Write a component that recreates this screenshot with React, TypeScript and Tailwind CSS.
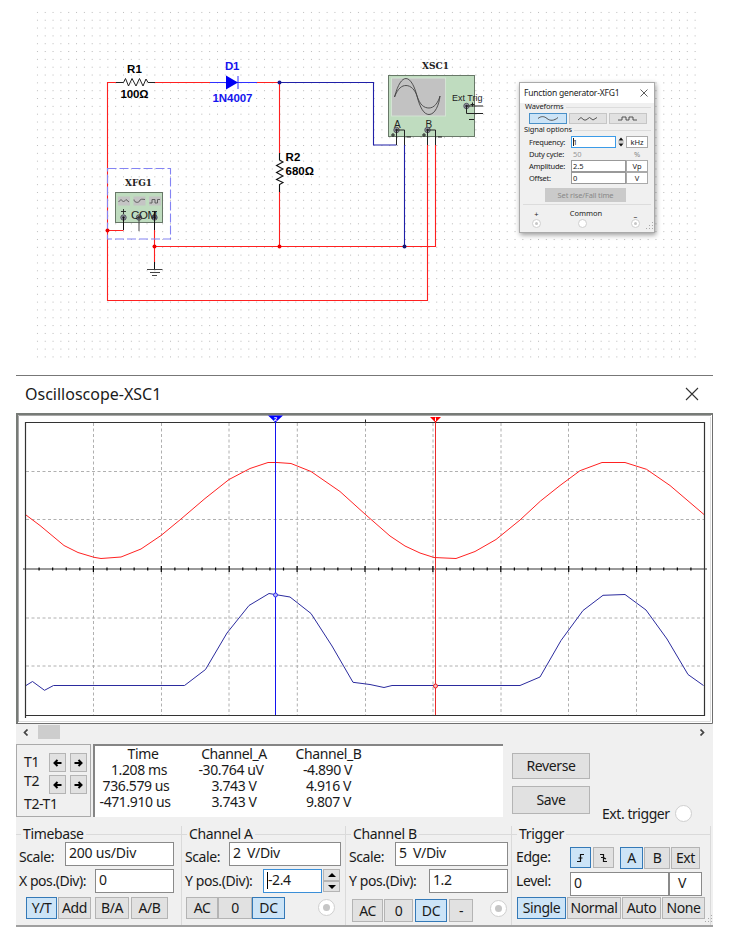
import React from "react";

const RED = "#ff2020";
const NAVY = "#2020a8";
const ARIAL = "'Liberation Sans', Arial, sans-serif";
const SLAB = "'DejaVu Serif', 'Courier New', serif";

/* ---------- Schematic ---------- */

function Pin({ x, y }: { x: number; y: number }) {
  return (
    <g>
      <circle cx={x} cy={y} r="2.7" fill="#999aa8" stroke="#55555f" />
      <circle cx={x} cy={y} r="1.2" fill="#222" />
    </g>
  );
}

function Schematic() {
  return (
    <svg width="746" height="374" viewBox="0 0 746 374" className="block" fill="none">
      <defs>
        <pattern id="dots" x="36.9" y="11.9" width="7.83" height="7.83" patternUnits="userSpaceOnUse">
          <rect width="1" height="1" fill="#b8b8b8" />
        </pattern>
      </defs>
      <rect x="36.5" y="11.5" width="660" height="347" fill="url(#dots)" />

      {/* wires */}
      <g stroke={RED} strokeWidth="1.1">
        <path d="M116 82.5H107.5V300.5H427.5V145M155 82.5H210M257 82.5H279.5V153M279.5 192V246.5M435.5 145V246.5H154.5M107.5 230.5H123.5M154.5 230V262" />
      </g>
      <path d="M279.5 82.5H373.5V145H396.5M404.5 145V246.5" stroke={NAVY} strokeWidth="1.1" />

      {/* R1 */}
      <path d="M116 82.5H123.5L125.5 78.5L128.5 86L132 78.5L136 86L139.5 78.5L143 86L146 79L148 82.5H155" stroke="#222" strokeWidth="1" />
      <g fontFamily={ARIAL} fontWeight="700" fontSize="11.5" fill="#000">
        <text x="127" y="73" textLength="15">R1</text>
        <text x="120.5" y="98" textLength="28">100Ω</text>
        <text x="285.5" y="161" textLength="15">R2</text>
        <text x="285.5" y="175" textLength="28.5">680Ω</text>
        <text x="225" y="70" fill="#1515ee" textLength="14.5">D1</text>
        <text x="212.5" y="101.5" fill="#1515ee" textLength="40">1N4007</text>
      </g>

      {/* D1 */}
      <path d="M210 82.5H257M238 76V89" stroke="#3030ff" />
      <path d="M226 75.5V89.5L238 82.5Z" fill="#0000f5" />

      {/* R2 */}
      <path d="M279.5 153V160L283 162L276.5 165.5L283 169L276.5 172.5L283 176L276.5 179.5L283 182.5L279.5 184.5V192" stroke="#111" strokeWidth="1.1" />

      {/* function generator symbol */}
      <rect x="107.5" y="168.5" width="63" height="70.5" stroke="#8484f4" strokeDasharray="9 3" strokeWidth="1.1" />
      <text x="125" y="186" fontFamily={SLAB} fontWeight="700" fontSize="9.5" fill="#222" textLength="27" lengthAdjust="spacingAndGlyphs">XFG1</text>
      <rect x="115.5" y="192.5" width="47" height="30" fill="#bfdcbf" stroke="#687868" />
      <g fill="#c4c4c4">
        <rect x="118" y="196.5" width="12" height="9" />
        <rect x="133.5" y="196.5" width="12" height="9" />
        <rect x="149" y="196.5" width="12" height="9" />
      </g>
      <g stroke="#555" strokeWidth=".9">
        <path d="M118.5 202L121 199.5L123.5 202L126 199.5L129 202" />
        <path d="M134 199.5C134 203 139 203 139.5 201C140 199 142 199 145 199.5" />
        <path d="M149.5 203H152V199.5H155V203H157.5V199.5H160" />
        <path d="M121 211.5H126M123.5 209V214M152 211.5H157" stroke="#222" />
      </g>
      <Pin x={123.5} y={217.5} />
      <Pin x={139} y={217.5} />
      <Pin x={154.5} y={217.5} />
      <text x="131" y="218.5" fontFamily={ARIAL} fontSize="11.5" fill="#222" textLength="26">COM</text>
      <path d="M123.5 217V230M154.5 211V230M154.5 262V269" stroke="#111" />
      <path d="M139 217V231M147 269.5H162.5M150 272.5H160M152 275.5H157" stroke="#444" />

      {/* oscilloscope symbol */}
      <text x="422" y="69" fontFamily={SLAB} fontWeight="700" fontSize="9.5" fill="#222" textLength="27" lengthAdjust="spacingAndGlyphs">XSC1</text>
      <rect x="388.5" y="75.5" width="86" height="61" fill="#bfdcbf" stroke="#687868" />
      <rect x="391.5" y="78" width="54" height="38" fill="#c2c2c2" stroke="#d4e3d4" />
      <path d="M394.5 97C398 84 402 78.500 406 78.500C411 78.500 415 88 417 96C420 108 424 114.500 429 114.500C435 114.500 439 105 440 96M394.500 97C398 88 402 85.500 406 85.500C411 85.500 415 90 417 96C420 105 424 108 429 108C434 108 438 103 440 96" stroke="#444" strokeWidth=".9" />
      <g fontFamily={ARIAL} fill="#222">
        <text x="452" y="101" fontSize="9.5" textLength="30.5" lengthAdjust="spacingAndGlyphs">Ext Trig</text>
        <text x="394" y="127.5" fontSize="10">A</text>
        <text x="425.5" y="127.5" fontSize="10">B</text>
      </g>
      <Pin x={466.5} y={106} />
      <Pin x={396.5} y={130} />
      <Pin x={427.5} y={130} />
      <path d="M466.5 106V113.5H483M466.5 106H483M469 119.5H474M396.5 130V145M396.5 130H404.5V145M427.5 130V145M427.5 130H435.5V145M391 135H395M393 133V137M422 135H426M424 133V137M406.5 137H411M438 137H442M470.5 104.5H474.5M472.5 102.5V106.5" stroke="#222" />

      {/* junctions */}
      <g fill="#ee0000">
        <circle cx="107.5" cy="230.5" r="2" />
        <circle cx="154.5" cy="246.5" r="2" />
        <circle cx="279.5" cy="246.5" r="2" />
      </g>
      <circle cx="279.5" cy="82.5" r="2" fill="#181890" />
      <circle cx="404.5" cy="246.5" r="2" fill="#181870" />
    </svg>
  );
}

/* ---------- Function generator window ---------- */

function Radio({ className = "", dot = false }: { className?: string; dot?: boolean }) {
  return (
    <span className={`flex shrink-0 items-center justify-center rounded-full border border-[#cfcfcf] bg-white ${className}`}>
      {dot && <span className="size-1/2 rounded-full bg-[#c6c6c6]" />}
    </span>
  );
}

function WaveButton({ d, on = false }: { d: string; on?: boolean }) {
  return (
    <div className={`flex h-[11px] w-[38px] items-center justify-center border ${on ? "border-[#4a90c8] bg-[#cce4f7]" : "border-[#c6c6c6] bg-[#e1e1e1]"}`}>
      <svg width="22" height="7" viewBox="0 0 22 7" fill="none" stroke="#444" strokeWidth=".9">
        <path d={d} />
      </svg>
    </div>
  );
}

function Param({ label, value, unit, kind = "normal" }: { label: string; value: string; unit: string; kind?: "normal" | "focus" | "off" }) {
  const border = kind === "off" ? "border-transparent text-[#999]" : kind === "focus" ? "border-[#3b9be8] bg-white" : "border-[#999] bg-white";
  return (
    <div className="flex h-[12px] items-center">
      <span className="w-[42px] whitespace-nowrap tracking-[-0.25px]">{label}</span>
      <span className={`flex h-[12px] items-center border pb-px pl-px ${border} ${kind === "focus" ? "w-[45px]" : "w-[55px]"}`}>
        {kind === "focus" && <span className="-mr-px h-[8px] w-px bg-[#222]" />}
        {value}
      </span>
      {kind === "focus" && (
        <svg width="10" height="12" viewBox="0 0 10 12" fill="#111">
          <path d="M2.500 4.500L5 1.500L7.500 4.500ZM2.500 7.500L5 10.500L7.500 7.500Z" />
          <path d="M2 6H8" stroke="#aaa" />
        </svg>
      )}
      <span className={`flex h-[12px] w-[22px] items-center justify-center border pb-px ${kind === "off" ? "border-transparent text-[#888]" : "border-[#aaa] bg-white"}`}>{unit}</span>
    </div>
  );
}

function FunctionGenerator() {
  return (
    <div className="absolute left-[519px] top-[82px] flex h-[151px] w-[136px] flex-col border border-[#aaa] bg-[#f0f0f0] text-[7.5px] leading-[10px] text-[#222] shadow-[1px_2px_5px_rgba(0,0,0,0.4)]">
      <div className="flex h-[20px] items-center justify-between bg-white pb-px pl-[4px] pr-[6px]">
        <span className="text-[8.5px] tracking-[-0.2px]">Function generator-XFG1</span>
        <svg width="8" height="8" stroke="#333" strokeWidth=".8"><path d="M.5 .5L7.500 7.500M7.500 .5L.5 7.500" /></svg>
      </div>
      <div className="flex h-[9px] items-center pl-[5px] leading-[9px] tracking-[-0.15px]">
        <span className="-translate-y-px">Waveforms</span>
        <span className="ml-[2px] mr-[3px] h-px flex-1 bg-[#dcdcdc]" />
      </div>
      <div className="flex gap-[2px] pl-[9px] pt-[1px]">
        <WaveButton on d="M1 3.5C4 1 7 1 10 3.500S17 6 21 2.500" />
        <WaveButton d="M1 5L4 2.500L7 5H9L12.500 2.500L16 5L20 2.500" />
        <WaveButton d="M1 5H5V2H9V5H12V2H16V5H20" />
      </div>
      <div className="flex h-[12px] items-center pl-[4px] leading-[10px] tracking-[-0.15px]">
        <span className="-translate-y-px">Signal options</span>
        <span className="ml-[2px] mr-[3px] h-px flex-1 bg-[#dcdcdc]" />
      </div>
      <div className="pl-[9px]">
        <Param label="Frequency:" value="1" unit="kHz" kind="focus" />
        <Param label="Duty cycle:" value="50" unit="%" kind="off" />
        <Param label="Amplitude:" value="2.5" unit="Vp" />
        <Param label="Offset:" value="0" unit="V" />
      </div>
      <div className="ml-[25px] mt-[4px] flex h-[14px] w-[81px] items-center justify-center bg-[#cacaca] pb-px tracking-[-0.15px] text-[#888]">Set rise/Fall time</div>
      <div className="mx-[3px] mt-[2px] h-px bg-[#dcdcdc]" />
      <div className="flex justify-between pl-[12px] pr-[14px] pt-[4px]">
        <div className="flex flex-col items-center"><span>+</span><Radio dot className="size-[9px]" /></div>
        <div className="flex flex-col"><span className="-translate-y-px">Common</span><Radio className="ml-[8px] size-[9px]" /></div>
        <div className="flex flex-col items-center"><span className="translate-y-[2px]">–</span><Radio dot className="size-[9px]" /></div>
      </div>
      <Grip />
    </div>
  );
}

/* ---------- Oscilloscope ---------- */

const COLS = [93.5, 161.5, 229, 297.3, 365.5, 433, 501, 568.5, 636.5];
const ROWS = [471.5, 519.5, 618, 666];
const TICKS = Array.from({ length: 49 }, (_, i) => 25.5 + (i + 1) * 13.58);

function Trace() {
  return (
    <svg width="697" height="311" viewBox="16 413 697 311" className="block" fill="none">
      <rect x="16" y="413" width="697" height="311" fill="#fff" />
      <path d="M17 724V414H713" stroke="#777b77" strokeWidth="2" />
      <path d="M18.5 722V415.5H711" stroke="#a8a8a8" />
      <path d="M712.5 414V723.5H16" stroke="#6f6f6f" />
      <path d="M710.5 417V721.5H19" stroke="#ddd" />
      <g stroke="#b0b0b0" strokeDasharray="3 2.5">
        {COLS.map((x) => <path key={x} d={`M${x} 423V715`} />)}
        {ROWS.map((y) => <path key={y} d={`M26 ${y}H704`} />)}
      </g>
      <path d="M23 569H707" stroke="#777" strokeWidth="1.5" />
      {TICKS.map((x, i) => <path key={x} d={i % 5 === 4 ? `M${x} 566V572` : `M${x} 567.5V570.5`} stroke="#000" strokeWidth="1.2" />)}
      <path d="M25.5 718V422.5H704.5V715.5H25.5" stroke="#333" strokeWidth="1.2" />
      <path d="M365.5 419.5V422" stroke="#222" />
      <path d="M26 515L40 525.5L64 545.5L78 552.5L94 557.3L101 558.5L121 557L141 549L161 535.5L181 519L205 498.5L229 479.5L250 468.5L268 462.5H277L291 463.5L311 471.5L340 491.5L366 515L390 536L405 546L420 553L434 557.5L456 558.5L475 551.5L496 539.5L520 520L540.5 501L560 485.5L580 470.7L602 462.5H625L646.5 469.3L670 485.5L704 514.5" stroke="#ff2222" />
      <path d="M26 685.5L32.5 681.5L44.5 690.3L53.5 685.5H184.5L205.5 669.5L227 633L249 605.5L269 593.5L290 597L311 613.5L332 646L353 682.3L370 684.5L384 687.5L392 685.5H520L540 677L561 640.5L583 610.5L603 595.3L625 594.5L646 610L667 639L688 674.5L703.5 685.5" stroke="#2b2b9e" />
      <path d="M275.5 422V715" stroke="#1414f0" />
      <path d="M435.5 422V715" stroke="#e82c2c" />
      <path d="M268 415.500H283L275.500 422.500Z" fill="#0000ff" />
      <path d="M430 417H441L435.500 422.500Z" fill="#ff0000" />
      <text x="273.700" y="421" fill="#fff" fontFamily={ARIAL} fontSize="6" fontWeight="700">2</text>
      <path d="M435.5 417.500V421" stroke="#fff" />
      <circle cx="275.5" cy="595" r="2" stroke="#3333ee" fill="#bbbbf8" />
      <circle cx="435.5" cy="686" r="2" stroke="#ee2222" fill="#f8bbbb" />
    </svg>
  );
}

function Btn({ children, on = false, className = "" }: { children: React.ReactNode; on?: boolean; className?: string }) {
  return (
    <div className={`flex shrink-0 items-center justify-center whitespace-nowrap border ${on ? "border-[#3479b7] bg-[#cce4f7]" : "border-[#b4b4b4] bg-[#e1e1e1]"} ${className}`}>
      {children}
    </div>
  );
}

function Field({ children, className = "" }: { children: React.ReactNode; className?: string }) {
  return <div className={`flex shrink-0 items-center whitespace-pre border border-[#8a8a8a] bg-white pb-[2px] pl-[3px] ${className}`}>{children}</div>;
}

function Arrow({ flip = false }: { flip?: boolean }) {
  return (
    <Btn className="h-[19px] w-[17px]">
      <svg width="9" height="8" viewBox="0 0 9 8" fill="none" stroke="#000" strokeWidth="2" className={flip ? "-scale-x-100" : ""}>
        <path d="M8.500 4H2M4.500 1L1.500 4L4.500 7" />
      </svg>
    </Btn>
  );
}

function Group({ title, className, children }: { title: string; className: string; children: React.ReactNode }) {
  return (
    <section className={`h-full shrink-0 ${className}`}>
      <div className="flex h-[16px] items-center">
        <span className="h-px w-[5px] bg-[#dadada]" />
        <span className="px-[2px] tracking-[-0.35px]">{title}</span>
        <span className="h-px flex-1 bg-[#dadada]" />
      </div>
      {children}
    </section>
  );
}

const READINGS = [
  { cls: "w-[96px]", rows: ["Time", "1.208 ms", "736.579 us", "-471.910 us"], pad: ["", "-translate-x-[4px]", "-translate-x-[7px]", "-translate-x-[8px]"] },
  { cls: "w-[86px]", rows: ["Channel_A", "-30.764 uV", "3.743 V", "3.743 V"], pad: ["", "-translate-x-[3px]", "", ""] },
  { cls: "w-[103px]", rows: ["Channel_B", "-4.890 V", "4.916 V", "9.807 V"], pad: ["", "-translate-x-px", "", ""] },
];

function Grip() {
  return (
    <svg width="9" height="9" viewBox="0 0 9 9" fill="#aaa" className="absolute bottom-[1px] right-0">
      <path d="M7 0h1v1h-1zM4 3h1v1h-1zM7 3h1v1h-1zM1 6h1v1h-1zM4 6h1v1h-1zM7 6h1v1h-1z" />
    </svg>
  );
}

function Oscilloscope() {
  return (
    <div className="relative ml-[16px] w-[697px] border-b-2 border-[#a0a0a0] bg-[#f0f0f0] text-[14px] leading-[16px] tracking-[-0.4px] text-[#1a1a1a]">
      <header className="flex h-[38px] items-center justify-between border-t border-[#777] bg-white pb-[2px] pl-[9px] pr-[14px]">
        <span className="text-[16px] tracking-[0px]">Oscilloscope-XSC1</span>
        <svg width="14" height="14" stroke="#333" strokeWidth="1.1"><path d="M1 1L13 13M13 1L1 13" /></svg>
      </header>
      <Trace />

      <div className="flex h-[20px] items-start justify-between pl-[7px] pr-[8px] pt-[1px]">
        <div className="flex items-center gap-[10px]">
          <svg width="5" height="7" fill="none" stroke="#444" strokeWidth="1.7"><path d="M4.500 .5L1.500 3.500L4.500 6.500" /></svg>
          <span className="h-[14px] w-[22px] bg-[#cdcdcd]" />
        </div>
        <svg width="5" height="7" fill="none" stroke="#444" strokeWidth="1.7" className="mt-[4px]"><path d="M.5 .5L3.500 3.500L.5 6.500" /></svg>
      </div>

      <div className="flex h-[73px]">
        <div className="h-[73px] w-[75px] border border-[#aaa] pl-[7px] pt-[8px]">
          <div className="flex h-[22px] items-start gap-[4px]"><span className="w-[21px] pt-[1px]">T1</span><Arrow /><Arrow flip /></div>
          <div className="flex h-[20px] items-start gap-[4px]"><span className="-mt-[2px] w-[21px]">T2</span><Arrow /><Arrow flip /></div>
          <div className="pt-px">T2-T1</div>
        </div>
        <div className="ml-[2px] flex w-[410px] border-l-2 border-t-2 border-[#858585] bg-white">
          {READINGS.map((col) => (
            <div key={col.rows[0]} className={`${col.cls} text-center`}>
              {col.rows.map((r, i) => <div key={i} className={`whitespace-nowrap ${col.pad[i]}`}>{r}</div>)}
            </div>
          ))}
        </div>
        <div className="ml-[9px] flex flex-col gap-[7px] pt-[9px]">
          <Btn className="h-[26px] w-[78px]">Reverse</Btn>
          <Btn className="h-[28px] w-[78px]">Save</Btn>
        </div>
        <div className="ml-[12px] flex items-center gap-[5px] self-end whitespace-nowrap">
          <span className="translate-y-[5px] tracking-[-0.45px]">Ext. trigger</span>
          <Radio className="size-[17px] translate-y-[5px]" />
        </div>
      </div>

      <div className="flex h-[108px] pt-[9px]">
        <Group title="Timebase" className="w-[165px]">
          <div className="flex h-[24px] pl-[3px]">
            <span className="w-[46px] pt-[7px]">Scale:</span>
            <Field className="h-[24px] w-[109px]"><span className="tracking-[-0.2px]">200 us/Div</span></Field>
          </div>
          <div className="mt-[3px] flex h-[24px] pl-[3px]">
            <span className="w-[76px] whitespace-nowrap pt-[4px] tracking-[-0.45px]">X pos.(Div):</span>
            <Field className="h-[24px] w-[79px]">0</Field>
          </div>
          <div className="mt-[4px] flex pl-[10px]">
            <Btn on className="h-[22px] w-[31px]">Y/T</Btn>
            <Btn className="ml-[1px] h-[22px] w-[33px]">Add</Btn>
            <Btn className="ml-[4px] h-[22px] w-[34px]">B/A</Btn>
            <Btn className="ml-[2px] h-[22px] w-[37px]">A/B</Btn>
          </div>
        </Group>
        <Group title="Channel A" className="w-[164px] border-l border-[#dadada]">
          <div className="flex h-[24px] pl-[3px]">
            <span className="w-[44px] pt-[7px]">Scale:</span>
            <Field className="h-[24px] w-[112px]">2  V/Div</Field>
          </div>
          <div className="mt-[3px] flex h-[24px] pl-[3px]">
            <span className="w-[78px] whitespace-nowrap pt-[4px]">Y pos.(Div):</span>
            <Field className="h-[24px] w-[59px] border-[#3b8fd8]!"><span className="h-[17px] w-px bg-black" />-2.4</Field>
            <div className="ml-[1px] flex flex-col">
              <Btn className="h-[12px] w-[17px]"><svg width="8" height="4"><path d="M0 4L4 0L8 4Z" /></svg></Btn>
              <Btn className="h-[11px] w-[17px]"><svg width="8" height="4"><path d="M0 0L4 4L8 0Z" /></svg></Btn>
            </div>
          </div>
          <div className="mt-[4px] flex pl-[4px]">
            <Btn className="h-[22px] w-[32px]">AC</Btn>
            <Btn className="h-[22px] w-[34px]">0</Btn>
            <Btn on className="h-[22px] w-[33px]">DC</Btn>
            <Radio dot className="ml-[33px] mt-[2px] size-[17px]" />
          </div>
        </Group>
        <Group title="Channel B" className="w-[166px] border-l border-[#dadada]">
          <div className="flex h-[24px] pl-[3px]">
            <span className="w-[46px] pt-[7px]">Scale:</span>
            <Field className="h-[24px] w-[113px]">5  V/Div</Field>
          </div>
          <div className="mt-[3px] flex h-[24px] pl-[3px]">
            <span className="w-[80px] whitespace-nowrap pt-[4px]">Y pos.(Div):</span>
            <Field className="h-[24px] w-[79px]">1.2</Field>
          </div>
          <div className="mt-[6px] flex pl-[6px]">
            <Btn className="h-[23px] w-[31px]">AC</Btn>
            <Btn className="ml-[1px] h-[23px] w-[29px]">0</Btn>
            <Btn on className="ml-[2px] h-[23px] w-[32px]">DC</Btn>
            <Btn className="ml-[2px] h-[23px] w-[24px]">-</Btn>
            <Radio dot className="ml-[17px] mt-[1px] size-[17px]" />
          </div>
        </Group>
        <Group title="Trigger" className="w-[200px] border-x border-[#dadada]">
          <div className="flex h-[30px] pl-[4px]">
            <span className="w-[54px] pt-[7px]">Edge:</span>
            <Btn on className="mt-[5px] h-[21px] w-[21px]">
              <svg width="10" height="10" fill="none" stroke="#111" strokeWidth="1.2"><path d="M1 8.500H4.500V1.500H8M2.500 5H6.500" /></svg>
            </Btn>
            <Btn className="ml-[2px] mt-[5px] h-[21px] w-[21px]">
              <svg width="10" height="10" fill="none" stroke="#111" strokeWidth="1.2"><path d="M1 1.500H4.500V8.500H8M2 4.500H4.500L7 6" /></svg>
            </Btn>
            <Btn on className="ml-[6px] mt-[5px] h-[22px] w-[23px]">A</Btn>
            <Btn className="ml-[1px] mt-[5px] h-[22px] w-[26px]">B</Btn>
            <Btn className="ml-[1px] mt-[5px] h-[22px] w-[29px]">Ext</Btn>
          </div>
          <div className="flex h-[24px] pl-[4px]">
            <span className="w-[54px] pt-px">Level:</span>
            <Field className="h-[24px] w-[99px]">0</Field>
            <Field className="h-[24px] w-[33px] pl-[8px]">V</Field>
          </div>
          <div className="mt-[1px] flex gap-[1px] pl-[5px]">
            <Btn on className="h-[22px] w-[49px]">Single</Btn>
            <Btn className="h-[22px] w-[54px]">Normal</Btn>
            <Btn className="h-[22px] w-[39px]">Auto</Btn>
            <Btn className="h-[22px] w-[43px]">None</Btn>
          </div>
        </Group>
      </div>
      <Grip />
    </div>
  );
}

export default function App() {
  return (
    <main className="relative h-[937px] w-[746px] overflow-hidden bg-white font-['Noto_Sans',sans-serif]">
      <div className="h-[375px]"><Schematic /></div>
      <Oscilloscope />
      <FunctionGenerator />
    </main>
  );
}
